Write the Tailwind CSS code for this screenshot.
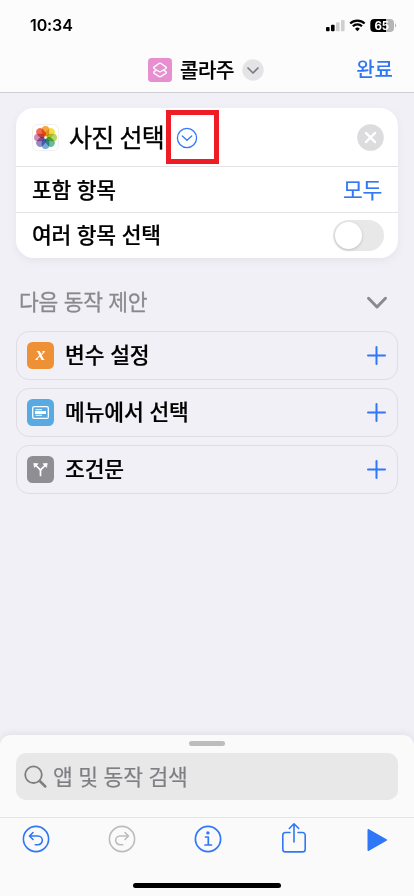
<!DOCTYPE html>
<html lang="ko">
<head>
<meta charset="utf-8">
<title>콜라주</title>
<script src="https://cdn.jsdelivr.net/npm/@tailwindcss/browser@4"></script>
</head>
<body class="bg-[#f1f0f6]">
<div class="relative flex h-[896px] w-[414px] flex-col overflow-hidden bg-[#f1f0f6] font-['Noto_Sans_CJK_KR',sans-serif] text-black">
  <header class="h-[93px] shrink-0 border-b border-[#cdccd1] bg-[#fcfcfc]">
    <div class="flex h-[48px] items-center justify-between pl-[30px] pr-[17px] pt-[2px]">
      <span class="font-['Inter',sans-serif] text-[16px] font-semibold leading-none tracking-[-0.1px]">10:34</span>
      <svg class="block" width="72" height="16" viewBox="0 0 72 16">
        <rect x="1" y="10" width="3.6" height="4.3" rx="1"/>
        <rect x="6" y="7.8" width="3.6" height="6.5" rx="1"/>
        <g fill="#cfcfcf"><rect x="11" y="5.3" width="3.6" height="9" rx="1"/><rect x="16" y="3" width="3.6" height="11.3" rx="1"/></g>
        <g fill="none" stroke="#000" stroke-width="2.1"><path d="M25.2 6.6a10.2 10.2 0 0 1 14.4 0"/><path d="M27.8 9.3a6.5 6.5 0 0 1 9.2 0"/></g>
        <path d="M32.4 14.2l-2.4-2.5a3.5 3.5 0 0 1 4.8 0z"/>
        <path d="M49.300 2H61v13H49.300a4 4 0 0 1-4-4V6a4 4 0 0 1 4-4z"/>
        <path d="M61 2h4a4 4 0 0 1 4 4v5a4 4 0 0 1-4 4H61z" fill="#b5b5b5"/>
        <path d="M70 6.300q2.400 2.200 0 4.400z" fill="#b5b5b5"/>
        <text x="56.800" y="12.600" fill="#fff" text-anchor="middle" font-family="Inter" font-size="11.500" font-weight="700">65</text>
      </svg>
    </div>
    <div class="flex h-[44px] items-center pl-[148px] pr-[21px]">
      <svg class="block shrink-0" width="24" height="24" viewBox="0 0 24 24"><rect width="24" height="24" rx="3.500" fill="#e78fd0"/><g fill="none" stroke="#fff" stroke-width="1.400" stroke-linejoin="round"><path d="M8.300 12L6.200 10.500Q5.200 9.600 6.200 8.800L11 5.500Q12 4.900 13 5.500L17.800 8.800Q18.800 9.600 17.800 10.500L13 13.500Q12 14.100 11 13.500L8.300 12"/><path d="M8.500 12L6.200 13.600Q5.200 14.500 6.200 15.300L11 18.400Q12 19 13 18.400L17.800 15.300Q18.800 14.500 17.800 13.600L15.500 12"/></g></svg>
      <h1 class="ml-[8px] w-[62px] whitespace-nowrap pb-[1px] text-[20px] font-medium leading-none tracking-[-0.4px] [-webkit-text-stroke:0.2px_currentColor]">콜라주</h1>
      <svg class="block shrink-0" width="22" height="22" viewBox="0 0 22 22"><circle cx="11" cy="11" r="10.700" fill="#e4e4e6"/><path d="M6 9l5 5 5-5" fill="none" stroke="#7c7c80" stroke-width="1.700" stroke-linecap="round" stroke-linejoin="round"/></svg>
      <span class="ml-auto pb-[3px] text-[20px] font-medium leading-none text-[#2f77f2]">완료</span>
    </div>
  </header>

  <main class="flex flex-col px-[16px] pt-[15px]">
    <section class="h-[150px] w-[382px] rounded-[18px] bg-white shadow-[0_3px_10px_rgba(0,0,0,0.05)]">
      <div class="flex h-[58px] items-center pl-[16px] pr-[14px]">
        <svg class="block shrink-0" width="27" height="27" viewBox="0 0 27 27"><rect x=".5" y=".5" width="26" height="26" rx="5" fill="#fff" stroke="#f0f0f0"/>
          <g class="mix-blend-multiply" transform="translate(13.500 13.500)">
            <rect class="mix-blend-multiply" x="-3.800" y="-11.500" width="7.600" height="10.300" rx="3.800" fill="#f5a63e"/>
            <rect class="mix-blend-multiply" x="-3.800" y="-11.500" width="7.600" height="10.300" rx="3.800" fill="#eee04a" transform="rotate(45)"/>
            <rect class="mix-blend-multiply" x="-3.800" y="-11.500" width="7.600" height="10.300" rx="3.800" fill="#b5d666" transform="rotate(90)"/>
            <rect class="mix-blend-multiply" x="-3.800" y="-11.500" width="7.600" height="10.300" rx="3.800" fill="#68bd98" transform="rotate(135)"/>
            <rect class="mix-blend-multiply" x="-3.800" y="-11.500" width="7.600" height="10.300" rx="3.800" fill="#75abd9" transform="rotate(180)"/>
            <rect class="mix-blend-multiply" x="-3.800" y="-11.500" width="7.600" height="10.300" rx="3.800" fill="#9589c4" transform="rotate(225)"/>
            <rect class="mix-blend-multiply" x="-3.800" y="-11.500" width="7.600" height="10.300" rx="3.800" fill="#d18ab5" transform="rotate(270)"/>
            <rect class="mix-blend-multiply" x="-3.800" y="-11.500" width="7.600" height="10.300" rx="3.800" fill="#ed6d58" transform="rotate(315)"/>
          </g></svg>
        <span class="ml-[10px] w-[107px] whitespace-nowrap pb-[2px] text-[25px] leading-none tracking-[-0.8px] [-webkit-text-stroke:0.35px_currentColor]">사진 선택</span>
        <svg class="mt-[1px] block shrink-0" width="22" height="22" viewBox="0 0 22 22"><g fill="none" stroke="#3478f6" stroke-width="1.300" stroke-linecap="round" stroke-linejoin="round"><circle cx="11" cy="11" r="9.600"/><path d="M6.300 9l4.700 4.300L15.700 9"/></g></svg>
        <svg class="ml-auto block shrink-0" width="27" height="27" viewBox="0 0 27 27"><circle cx="13.500" cy="13.500" r="13.300" fill="#dcdcde"/><path d="M8.900 8.900l9.200 9.200M18.100 8.900l-9.200 9.200" stroke="#fff" stroke-width="2.200" stroke-linecap="round"/></svg>
      </div>
      <div class="flex h-[46px] items-center justify-between border-t border-[#e3e3e5] px-[16px] text-[21.500px] leading-none tracking-[-0.25px]"><span class="pb-[2px] font-medium [-webkit-text-stroke:0.2px_currentColor]">포함 항목</span><span class="pb-[1px] text-[#3478f6] [-webkit-text-stroke:0.2px_currentColor]">모두</span></div>
      <div class="flex h-[46px] items-center justify-between border-t border-[#e3e3e5] pl-[16px] pr-[14px] text-[21.500px] leading-none tracking-[-0.25px]">
        <span class="pb-[4px] font-medium [-webkit-text-stroke:0.2px_currentColor]">여러 항목 선택</span>
        <span class="flex h-[31px] w-[51px] items-center rounded-full bg-[#e8e8e8] pl-[2px]"><span class="h-[27px] w-[27px] rounded-full bg-white shadow-[0_1px_3px_rgba(0,0,0,0.18)]"></span></span>
      </div>
    </section>

    <div class="mt-[22px] flex h-[43px] items-center justify-between pl-[3px] pr-[10px]">
      <h2 class="pb-[2px] text-[21.500px] leading-none tracking-[-0.3px] text-[#8a8a8e] [-webkit-text-stroke:0.3px_currentColor]">다음 동작 제안</h2>
      <svg class="mt-[3px] block" width="22" height="14" viewBox="0 0 22 14"><path d="M2.500 2.300L11 11l8.500-8.700" fill="none" stroke="#8a8a8e" stroke-width="3" stroke-linecap="round" stroke-linejoin="round"/></svg>
    </div>

    <div class="mt-[8px] flex flex-col gap-[8px] text-[21.500px] font-medium leading-none">
      <div class="flex h-[49px] items-center rounded-[13px] border border-[#dedde2] pl-[10px] pr-[11px]">
        <svg class="block" width="27" height="27" viewBox="0 0 27 27"><rect width="27" height="27" rx="5.500" fill="#ee9036"/><text x="13.500" y="18" text-anchor="middle" fill="#fff" font-family="Liberation Serif" font-style="italic" font-weight="700" font-size="19">x</text></svg>
        <span class="ml-[11px] pb-[3px] tracking-[-0.15px] [-webkit-text-stroke:0.2px_currentColor]">변수 설정</span>
        <svg class="ml-auto block" width="19" height="19" viewBox="0 0 19 19"><path d="M9.500 1v17M1 9.500h17" stroke="#2f77f6" stroke-width="2" stroke-linecap="round"/></svg>
      </div>
      <div class="flex h-[49px] items-center rounded-[13px] border border-[#dedde2] pl-[10px] pr-[11px]">
        <svg class="block" width="27" height="27" viewBox="0 0 27 27"><rect width="27" height="27" rx="5.500" fill="#58abe2"/><rect x="5.700" y="7.600" width="15.600" height="11.800" rx="1.500" fill="none" stroke="#fff" stroke-width="1.300"/><path d="M8.500 10.700h6.500M8.500 16.300h6.500" stroke="#fff" stroke-opacity=".8" stroke-width="1.200"/><rect x="8" y="12" width="11" height="3" fill="#fff"/></svg>
        <span class="ml-[11px] pb-[3px] tracking-[-0.15px] [-webkit-text-stroke:0.2px_currentColor]">메뉴에서 선택</span>
        <svg class="ml-auto block" width="19" height="19" viewBox="0 0 19 19"><path d="M9.500 1v17M1 9.500h17" stroke="#2f77f6" stroke-width="2" stroke-linecap="round"/></svg>
      </div>
      <div class="flex h-[49px] items-center rounded-[13px] border border-[#dedde2] pl-[10px] pr-[11px]">
        <svg class="block" width="27" height="27" viewBox="0 0 27 27"><rect width="27" height="27" rx="5.500" fill="#8e8e93"/><path d="M13.500 19.500v-4.300q0-1.200-.9-2.100L9 9.500M13.500 15.200q0-1.200.9-2.100L18 9.500" fill="none" stroke="#fff" stroke-width="1.700" stroke-linecap="round"/><path d="M6.800 7.500l4.200.3-3.500 3.600zM20.200 7.500l-4.200.3 3.500 3.600z" fill="#fff" stroke="#fff" stroke-width=".8" stroke-linejoin="round"/></svg>
        <span class="ml-[11px] pb-[3px] tracking-[-0.15px] [-webkit-text-stroke:0.2px_currentColor]">조건문</span>
        <svg class="ml-auto block" width="19" height="19" viewBox="0 0 19 19"><path d="M9.500 1v17M1 9.500h17" stroke="#2f77f6" stroke-width="2" stroke-linecap="round"/></svg>
      </div>
    </div>
  </main>

  <footer class="mt-auto h-[161px] shrink-0 rounded-t-[11px] bg-[#fafafa] shadow-[0_-1px_8px_rgba(0,0,0,0.08)]">
    <div class="flex h-[83px] flex-col items-center border-b border-[#e5e5e6] pt-[6px]">
      <div class="h-[5px] w-[36px] rounded-full bg-[#bdbdbf]"></div>
      <div class="mt-[7px] flex h-[47px] w-[382px] items-center rounded-[10px] bg-[#e8e8e8] pl-[8px] text-[#7f7f83]">
        <svg class="block" width="24" height="24" viewBox="0 0 24 24"><g fill="none" stroke="currentColor" stroke-linecap="round"><circle cx="9.500" cy="9.700" r="8.300" stroke-width="1.800"/><path d="M15.800 16l5.500 5.500" stroke-width="2.500"/></g></svg>
        <span class="ml-[5px] pb-[2px] text-[21.500px] leading-none tracking-[-0.25px] [-webkit-text-stroke:0.2px_currentColor]">앱 및 동작 검색</span>
      </div>
    </div>
    <div class="flex h-[47px] items-center gap-[58px] pl-[22px] text-[#2f77f6]">
      <svg class="mb-[5px] block shrink-0" width="28" height="28" viewBox="0 0 28 28"><g fill="none" stroke="currentColor" stroke-width="1.600" stroke-linecap="round" stroke-linejoin="round"><circle cx="14" cy="14" r="12.600"/><path d="M11 7.500L7.500 11l3.500 3.500M7.800 11H16a4.300 4.300 0 0 1 0 8.700h-2.700"/></g></svg>
      <svg class="mb-[5px] block shrink-0 text-[#bcbcbe]" width="28" height="28" viewBox="0 0 28 28"><g fill="none" stroke="currentColor" stroke-width="1.600" stroke-linecap="round" stroke-linejoin="round"><circle cx="14" cy="14" r="12.600"/><path d="M17 7.500l3.500 3.500-3.500 3.500M20.200 11H12a4.300 4.300 0 0 0 0 8.700h2.700"/></g></svg>
      <svg class="mb-[5px] block shrink-0" width="28" height="28" viewBox="0 0 28 28"><g fill="none" stroke="currentColor" stroke-width="1.700" stroke-linecap="round" stroke-linejoin="round"><circle cx="14" cy="14" r="12.600"/><path d="M11.500 12h2.800v8M11 20h6.500"/></g><circle cx="13.900" cy="7.900" r="1.700" fill="currentColor"/></svg>
      <svg class="mb-[8px] ml-px block shrink-0" width="26" height="32" viewBox="0 0 26 32"><g fill="none" stroke="currentColor" stroke-width="1.600" stroke-linecap="round" stroke-linejoin="round"><path d="M9 10.500H4.500a2.700 2.700 0 0 0-2.700 2.700v14a2.700 2.700 0 0 0 2.700 2.700h17a2.700 2.700 0 0 0 2.700-2.700v-14a2.700 2.700 0 0 0-2.700-2.700H17M13 20V2M8.300 6.500L13 1.800l4.700 4.700"/></g></svg>
      <svg class="mb-[3px] ml-[2px] block shrink-0" width="21" height="24" viewBox="0 0 21 24"><path d="M1.500 2v20l17.500-10z" fill="currentColor" stroke="currentColor" stroke-width="2" stroke-linejoin="round"/></svg>
    </div>
    <div class="mx-auto mt-[18px] h-[5px] w-[148px] rounded-full bg-black"></div>
  </footer>
  <div class="absolute left-[166px] top-[110px] h-[54px] w-[53px] border-[5px] border-[#ee1c24]"></div>
</div>
</body>
</html>
